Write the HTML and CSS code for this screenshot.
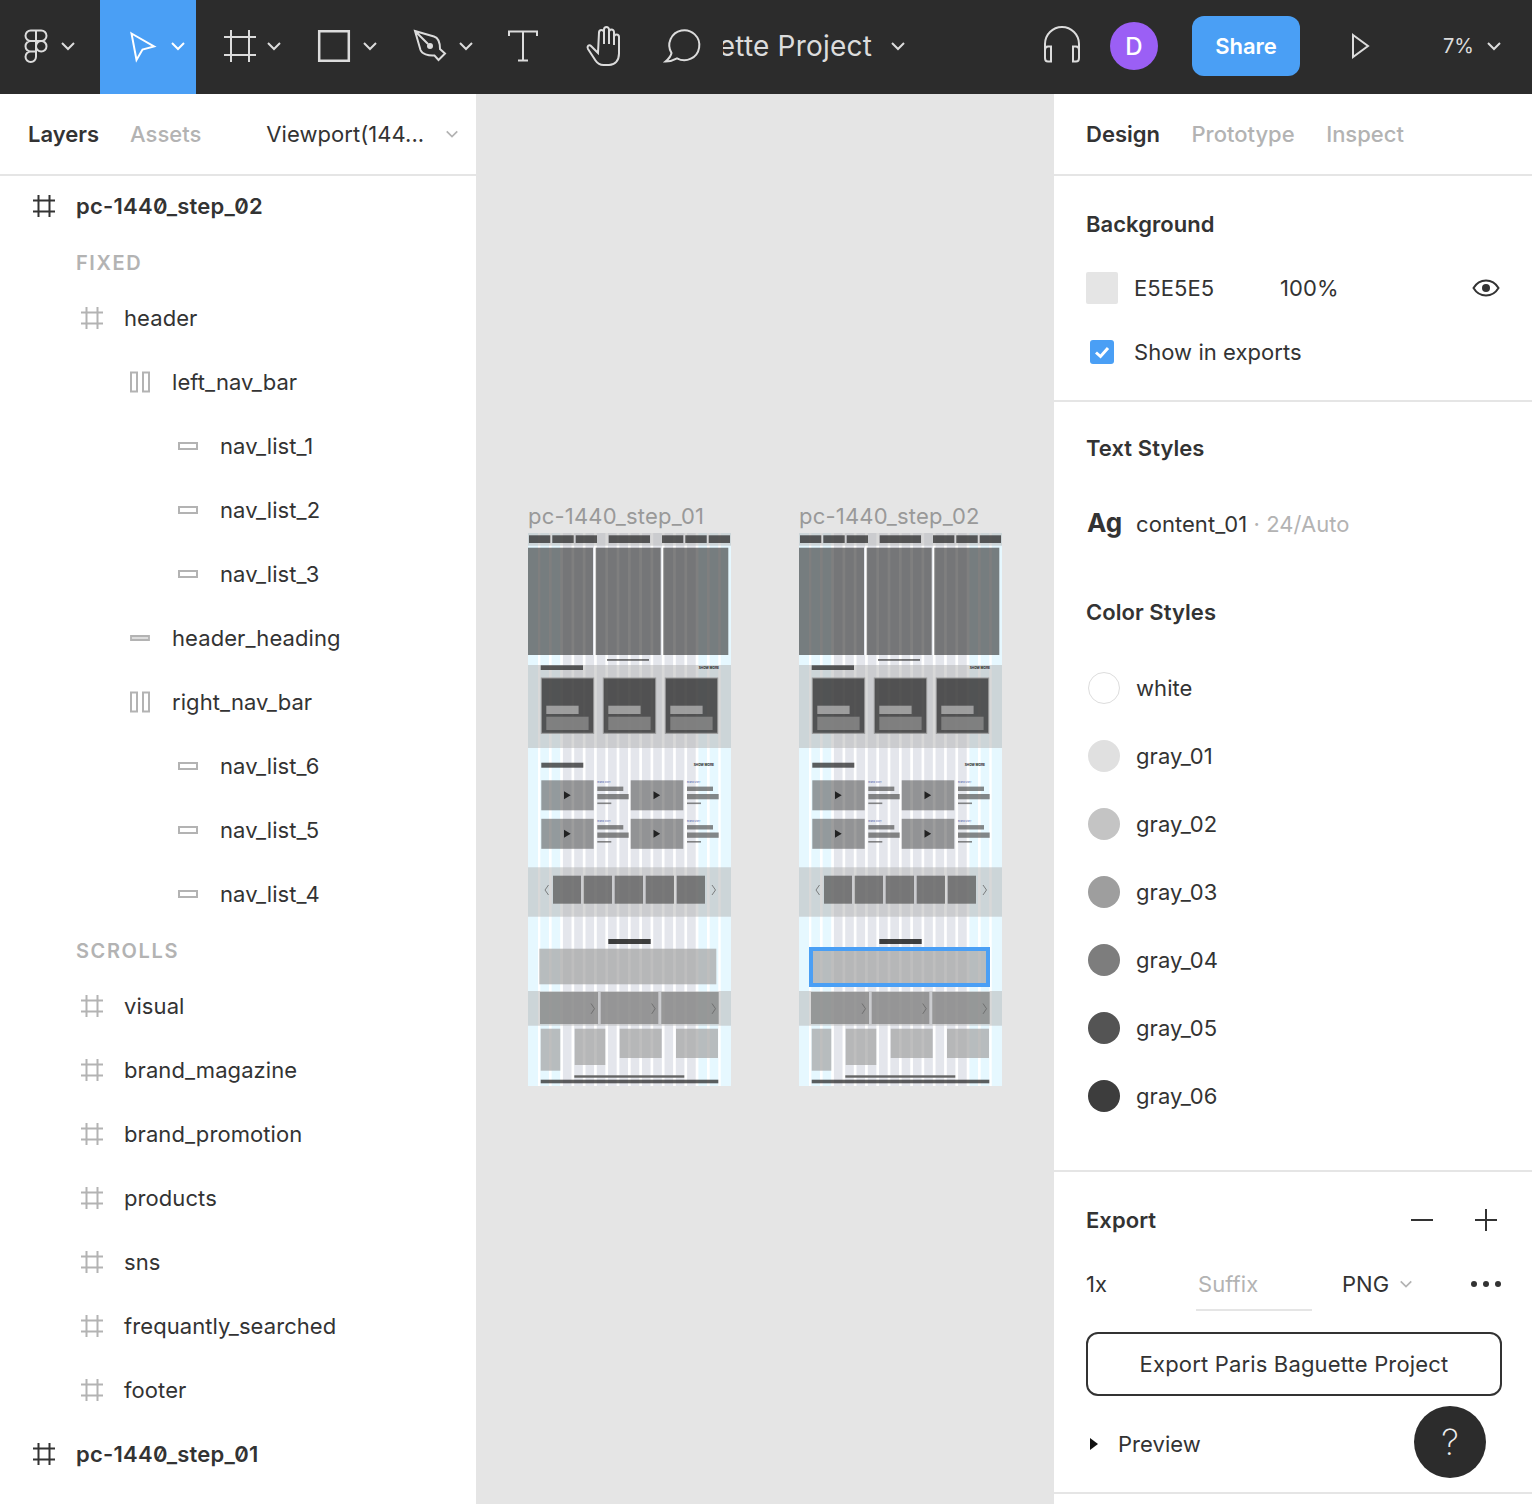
FILE: index.html
```html
<!DOCTYPE html>
<html lang="en">
<head>
  <meta charset="UTF-8" />
  <title>Paris Baguette Project - Figma</title>
  <link rel="stylesheet" href="styles.css">
</head>
<body>
  <!-- shared icons and the wireframe drawn on the canvas -->
  <svg class="defs" aria-hidden="true">
    <symbol id="i-chev" viewBox="0 0 16 16"><path d="M2 5l6 6 6-6" fill="none" stroke="currentColor" stroke-width="2"/></symbol>
    <symbol id="i-frame" viewBox="0 0 24 24"><path d="M6.5 1v22M17.5 1v22M1 6.5h22M1 17.5h22" fill="none" stroke="currentColor" stroke-width="2"/></symbol>
    <symbol id="i-cols" viewBox="0 0 24 24"><path d="M3 2.5h6v19H3zM15 2.5h6v19h-6z" fill="none" stroke="currentColor" stroke-width="2"/></symbol>
    <symbol id="i-rect" viewBox="0 0 24 24"><path d="M3 9h18v6H3z" fill="none" stroke="currentColor" stroke-width="2"/></symbol>
    <symbol id="i-bar" viewBox="0 0 24 24"><path d="M3 10h18v4H3z" fill="#ddd" stroke="currentColor" stroke-width="1.8"/></symbol>

    <symbol id="video-row" viewBox="0 0 203 553">
      <rect class="w-thumb" x="13.3" y="247.3" width="52.4" height="30"/>
      <rect class="w-thumb" x="102.7" y="247.3" width="52.6" height="30"/>
      <path class="w-play" d="M36 258.2l6.7 4-6.7 4zM125.5 258.2l6.7 4-6.7 4z"/>
      <rect class="w-line" x="69.3" y="253.6" width="26" height="4.4"/>
      <rect class="w-line" x="69.3" y="261" width="31.4" height="5.3"/>
      <rect class="w-line" x="69.3" y="269.5" width="14" height="1.6"/>
      <rect class="w-line" x="159" y="253.6" width="26" height="4.4"/>
      <rect class="w-line" x="159" y="261" width="31.7" height="5.3"/>
      <rect class="w-line" x="159" y="269.5" width="14" height="1.6"/>
    </symbol>

    <symbol id="wireframe" viewBox="0 0 203 553">
      <rect class="w-page" width="203" height="553"/>

      <!-- layout grid, the frames sit over it and let it show through -->
      <rect class="w-col-side" width="10" height="553"/>
      <rect class="w-col-side" x="12.33" width="8.6" height="553"/>
      <rect class="w-col-side" x="23.62" width="8.6" height="553"/>
      <rect class="w-col" x="34.91" width="8.6" height="553"/>
      <rect class="w-col" x="46.2" width="8.6" height="553"/>
      <rect class="w-col" x="57.49" width="8.6" height="553"/>
      <rect class="w-col" x="68.78" width="8.6" height="553"/>
      <rect class="w-col" x="80.07" width="8.6" height="553"/>
      <rect class="w-col" x="91.36" width="8.6" height="553"/>
      <rect class="w-col" x="102.65" width="8.6" height="553"/>
      <rect class="w-col" x="113.94" width="8.6" height="553"/>
      <rect class="w-col" x="125.23" width="8.6" height="553"/>
      <rect class="w-col" x="136.52" width="8.6" height="553"/>
      <rect class="w-col" x="147.81" width="8.6" height="553"/>
      <rect class="w-col" x="159.1" width="8.6" height="553"/>
      <rect class="w-col-side" x="170.39" width="8.6" height="553"/>
      <rect class="w-col-side" x="181.68" width="8.6" height="553"/>
      <rect class="w-col-side" x="192.7" width="10.3" height="553"/>

      <rect class="w-band" width="203" height="12.7"/>
      <rect class="w-dark" x="1" y="2.3" width="21.3" height="7.7"/>
      <rect class="w-dark" x="24.3" y="2.3" width="21.4" height="7.7"/>
      <rect class="w-dark" x="47.7" y="2.3" width="21.3" height="7.7"/>
      <rect class="w-dark" x="80.7" y="2.3" width="41.3" height="7.7"/>
      <rect class="w-dark" x="134" y="2.3" width="21.3" height="7.7"/>
      <rect class="w-dark" x="157.3" y="2.3" width="21.4" height="7.7"/>
      <rect class="w-dark" x="180.7" y="2.3" width="21.3" height="7.7"/>

      <rect class="w-hero" y="14.7" width="65" height="107.3"/>
      <rect class="w-hero" x="67.7" y="14.7" width="65" height="107.3"/>
      <rect class="w-hero" x="135.3" y="14.7" width="65" height="107.3"/>
      <rect class="w-ink" x="79" y="126.3" width="42" height="1.3"/>

      <rect class="w-band" y="132" width="203" height="83"/>
      <rect class="w-dark" x="12.7" y="132.3" width="42.3" height="4.7"/>
      <rect class="w-card" x="13.3" y="145" width="52.4" height="55.3"/>
      <rect class="w-card" x="75.3" y="145" width="52.4" height="55.3"/>
      <rect class="w-card" x="137.3" y="145" width="52.4" height="55.3"/>
      <rect class="w-soft" x="18.3" y="172.7" width="32.3" height="8.3"/>
      <rect class="w-soft" x="80.3" y="172.7" width="32.3" height="8.3"/>
      <rect class="w-soft" x="142.3" y="172.7" width="32.3" height="8.3"/>
      <rect class="w-inner" x="18.3" y="183.7" width="42.3" height="13.3"/>
      <rect class="w-inner" x="80.3" y="183.7" width="42.3" height="13.3"/>
      <rect class="w-inner" x="142.3" y="183.7" width="42.3" height="13.3"/>

      <rect class="w-dark" x="13.3" y="229.7" width="42" height="5"/>

      <use href="#video-row" width="203" height="553"/>
      <use href="#video-row" y="38.5" width="203" height="553"/>

      <rect class="w-band" y="334.3" width="203" height="49.4"/>
      <rect class="w-square" x="25" y="342.7" width="28" height="28"/>
      <rect class="w-square" x="55.7" y="342.7" width="28.3" height="28"/>
      <rect class="w-square" x="86.7" y="342.7" width="28.3" height="28"/>
      <rect class="w-square" x="117.7" y="342.7" width="28.3" height="28"/>
      <rect class="w-square" x="148.7" y="342.7" width="28.3" height="28"/>
      <path class="w-chev" d="M20.5 352l-3.5 5 3.5 5M184 352l3.5 5-3.5 5"/>

      <rect class="w-ink" x="80.3" y="406" width="42.4" height="5"/>
      <rect class="w-light" x="11.3" y="415.7" width="177" height="35.6"/>

      <rect class="w-band" y="458" width="203" height="34.7"/>
      <rect class="w-slab" x="12" y="459" width="58" height="32"/>
      <rect class="w-slab" x="72.7" y="459" width="57.6" height="32"/>
      <rect class="w-slab" x="133.3" y="459" width="57.4" height="32"/>
      <path class="w-chev" d="M63 470.5l3.5 5.2-3.5 5.2M123.7 470.5l3.5 5.2-3.5 5.2M184 470.5l3.5 5.2-3.5 5.2"/>

      <rect class="w-light" x="12.7" y="495.7" width="19.6" height="42"/>
      <rect class="w-light" x="46.7" y="495.7" width="30.6" height="36.3"/>
      <rect class="w-light" x="91.7" y="495.7" width="42" height="29.3"/>
      <rect class="w-light" x="148" y="495.7" width="42" height="29.3"/>
      <rect class="w-foot" x="46.3" y="542.3" width="110" height="2.4"/>
      <rect class="w-dark" x="12.7" y="546.7" width="177.6" height="3.6"/>
    </symbol>
  </svg>

  <div class="app">
    <header class="topbar">
      <div class="tool tool-logo">
        <svg class="tool-icon" viewBox="0 0 40 40"><path d="M20 4.5h-5.25a5.25 5.25 0 0 0 0 10.5H20zM20 4.5h5.25a5.25 5.25 0 0 1 0 10.5H20zM20 15h-5.25a5.25 5.25 0 0 0 0 10.5H20zM20 25.5h-5.25a5.25 5.25 0 1 0 5.25 5.25z"/><circle cx="25.25" cy="20.25" r="5.25"/></svg>
        <svg class="chev"><use href="#i-chev"/></svg>
      </div>
      <div class="tool active">
        <svg class="tool-icon" viewBox="0 0 40 40"><path d="M7.5 7.5L30 20.5l-11.5 3-6 10.5z"/></svg>
        <svg class="chev"><use href="#i-chev"/></svg>
      </div>
      <div class="tool">
        <svg class="tool-icon" viewBox="0 0 40 40"><path d="M11 4v32M29 4v32M4 11h32M4 29h32"/></svg>
        <svg class="chev"><use href="#i-chev"/></svg>
      </div>
      <div class="tool">
        <svg class="tool-icon" viewBox="0 0 40 40"><path class="thick" d="M3.2 5.2h29.6v29.6H3.2z"/></svg>
        <svg class="chev"><use href="#i-chev"/></svg>
      </div>
      <div class="tool">
        <svg class="tool-icon" viewBox="0 0 40 40"><path d="M3 5l19 5.5c5 1.500 6 6.500 6 12.500l5 4.500-6.500 6.500-4-4.500C16 30 10 28 8.500 24zM3 5l13 13"/><circle class="dot" cx="18" cy="20" r="3"/></svg>
        <svg class="chev"><use href="#i-chev"/></svg>
      </div>
      <div class="plain-tool tool-text">
        <svg class="tool-icon small" viewBox="0 0 32 32"><path d="M2 6V1.500h28V6M16 1.500v29M11 30.500h10"/></svg>
      </div>
      <div class="plain-tool tool-hand">
        <svg class="tool-icon" viewBox="0 0 40 40"><path d="M15 27l-7-7c-2-2-4.500.5-3 3l7.500 11.500c2 3 4 4.500 8 4.500H26c6 0 10-4.500 10-11.500V11a2.500 2.500 0 0 0-5 0v8V6a2.500 2.500 0 0 0-5 0v12V3.500a2.500 2.500 0 0 0-5 0V18V6.500a2.500 2.500 0 0 0-5 0z"/></svg>
      </div>
      <div class="plain-tool tool-comment">
        <svg class="tool-icon" viewBox="0 0 40 40"><path d="M9.500 27A15 15 0 1 1 15 32.300c-3 1.700-7 3.200-11.500 3.200 3-2.500 5.500-5.500 6-8.500z"/></svg>
      </div>
      <div class="doc-title"><span>Paris Baguette Project</span></div>
      <svg class="chev doc-chev"><use href="#i-chev"/></svg>

      <svg class="tool-icon phones" viewBox="0 0 40 40"><path d="M3 24v-6a17 17 0 0 1 34 0v6M3 24c0-2 1-3.500 3-3.500h3v15H6c-2 0-3-1.500-3-3.500zM37 24c0-2-1-3.500-3-3.500h-3v15h3c2 0 3-1.500 3-3.500z"/></svg>
      <div class="avatar">D</div>
      <button class="share">Share</button>
      <svg class="tool-icon play" viewBox="0 0 18 28"><path d="M1 3l15 11L1 25z"/></svg>
      <div class="zoom-val">7%</div>
      <svg class="chev zoom-chev"><use href="#i-chev"/></svg>
    </header>

    <div class="workspace">
      <aside class="layers">
        <div class="tabs">
          <span class="tab on">Layers</span>
          <span class="tab">Assets</span>
          <span class="page-name">Viewport(144...</span>
          <svg class="chev page-chev"><use href="#i-chev"/></svg>
        </div>
        <ul class="tree">
          <li class="row top"><svg class="row-icon"><use href="#i-frame"/></svg>pc-1440_step_02</li>
          <li class="sec-label">FIXED</li>
          <li class="row lv1"><svg class="row-icon"><use href="#i-frame"/></svg>header</li>
          <li class="row lv2"><svg class="row-icon"><use href="#i-cols"/></svg>left_nav_bar</li>
          <li class="row lv3"><svg class="row-icon"><use href="#i-rect"/></svg>nav_list_1</li>
          <li class="row lv3"><svg class="row-icon"><use href="#i-rect"/></svg>nav_list_2</li>
          <li class="row lv3"><svg class="row-icon"><use href="#i-rect"/></svg>nav_list_3</li>
          <li class="row lv2"><svg class="row-icon"><use href="#i-bar"/></svg>header_heading</li>
          <li class="row lv2"><svg class="row-icon"><use href="#i-cols"/></svg>right_nav_bar</li>
          <li class="row lv3"><svg class="row-icon"><use href="#i-rect"/></svg>nav_list_6</li>
          <li class="row lv3"><svg class="row-icon"><use href="#i-rect"/></svg>nav_list_5</li>
          <li class="row lv3"><svg class="row-icon"><use href="#i-rect"/></svg>nav_list_4</li>
          <li class="sec-label">SCROLLS</li>
          <li class="row lv1"><svg class="row-icon"><use href="#i-frame"/></svg>visual</li>
          <li class="row lv1"><svg class="row-icon"><use href="#i-frame"/></svg>brand_magazine</li>
          <li class="row lv1"><svg class="row-icon"><use href="#i-frame"/></svg>brand_promotion</li>
          <li class="row lv1"><svg class="row-icon"><use href="#i-frame"/></svg>products</li>
          <li class="row lv1"><svg class="row-icon"><use href="#i-frame"/></svg>sns</li>
          <li class="row lv1"><svg class="row-icon"><use href="#i-frame"/></svg>frequantly_searched</li>
          <li class="row lv1"><svg class="row-icon"><use href="#i-frame"/></svg>footer</li>
          <li class="row top"><svg class="row-icon"><use href="#i-frame"/></svg>pc-1440_step_01</li>
        </ul>
      </aside>

      <main class="canvas">
        <div class="board board-1">
          <div class="board-name">pc-1440_step_01</div>
          <svg class="board-art" viewBox="0 0 203 553">
            <use href="#wireframe" width="203" height="553"/>
            <text class="w-tiny" x="170.7" y="136.2">SHOW MORE</text>
            <text class="w-tiny" x="165.7" y="233.2">SHOW MORE</text>
            <text class="w-blue" x="69.3" y="250">Brand Story</text>
            <text class="w-blue" x="159" y="250">Brand Story</text>
            <text class="w-blue" x="69.3" y="288.5">Brand Story</text>
            <text class="w-blue" x="159" y="288.5">Brand Story</text>
          </svg>
        </div>
        <div class="board board-2">
          <div class="board-name">pc-1440_step_02</div>
          <svg class="board-art" viewBox="0 0 203 553">
            <use href="#wireframe" width="203" height="553"/>
            <text class="w-tiny" x="170.7" y="136.2">SHOW MORE</text>
            <text class="w-tiny" x="165.7" y="233.2">SHOW MORE</text>
            <text class="w-blue" x="69.3" y="250">Brand Story</text>
            <text class="w-blue" x="159" y="250">Brand Story</text>
            <text class="w-blue" x="69.3" y="288.5">Brand Story</text>
            <text class="w-blue" x="159" y="288.5">Brand Story</text>
          </svg>
          <div class="selection"></div>
        </div>
      </main>

      <aside class="design">
        <div class="tabs tabs-design">
          <span class="tab on">Design</span>
          <span class="tab">Prototype</span>
          <span class="tab">Inspect</span>
        </div>

        <section class="panel panel-bg">
          <h3>Background</h3>
          <div class="prop">
            <span class="bg-swatch"></span>
            <span class="bg-hex">E5E5E5</span>
            <span>100%</span>
            <svg class="eye" viewBox="0 0 28 18"><path d="M1.5 9C4.5 4 9 1.500 14 1.500S23.500 4 26.500 9c-3 5-7.500 7.500-12.500 7.500S4.500 14 1.500 9z"/><circle cx="14" cy="9" r="4"/></svg>
          </div>
          <div class="prop">
            <span class="check"><svg viewBox="0 0 24 24"><path d="M6 12.500l4.500 4L18 8"/></svg></span>
            <span>Show in exports</span>
          </div>
        </section>

        <section class="panel panel-styles">
          <h3>Text Styles</h3>
          <div class="prop text-style"><span class="ag">Ag</span><span>content_01</span><span class="muted">&nbsp;· 24/Auto</span></div>
          <h3 class="color-head">Color Styles</h3>
          <ul class="colors">
            <li><span class="dot-sw c-white"></span>white</li>
            <li><span class="dot-sw c-1"></span>gray_01</li>
            <li><span class="dot-sw c-2"></span>gray_02</li>
            <li><span class="dot-sw c-3"></span>gray_03</li>
            <li><span class="dot-sw c-4"></span>gray_04</li>
            <li><span class="dot-sw c-5"></span>gray_05</li>
            <li><span class="dot-sw c-6"></span>gray_06</li>
          </ul>
        </section>

        <section class="panel panel-export">
          <div class="export-head">
            <h3>Export</h3>
            <svg class="ctl" viewBox="0 0 32 32"><path d="M5 16h22"/></svg>
            <svg class="ctl" viewBox="0 0 32 32"><path d="M5 16h22M16 5v22"/></svg>
          </div>
          <div class="prop export-row">
            <span class="scale">1x</span>
            <span class="suffix">Suffix</span>
            <span class="format">PNG</span>
            <svg class="chev format-chev"><use href="#i-chev"/></svg>
            <span class="more"><i></i><i></i><i></i></span>
          </div>
          <button class="export-btn">Export Paris Baguette Project</button>
          <div class="prop preview"><span class="caret"></span>Preview</div>
        </section>
      </aside>
    </div>

    <div class="help">?</div>
  </div>
</body>
</html>
```

FILE: styles.css
```css
* {
  box-sizing: border-box;
}

html, body {
  margin: 0;
  padding: 0;
}

body {
  font-family: Inter, "Noto Sans", sans-serif;
  font-size: 24px;
  color: #333;
  background: white;
  overflow: hidden;
}

.defs {
  position: absolute;
  width: 0;
  height: 0;
}

.app {
  position: relative;
  width: 1532px;
  height: 1504px;
  display: flex;
  flex-direction: column;
  overflow: hidden;
}

/* top bar */
.topbar {
  height: 94px;
  flex: none;
  background: #2c2c2c;
  display: flex;
  align-items: center;
  padding-bottom: 2px;
  color: #dcdcdc;
}

.tool {
  width: 96px;
  height: 94px;
  margin-bottom: -2px;
  flex: none;
  display: flex;
  align-items: center;
  gap: 6px;
  padding: 0 0 2px 24px;
}

.tool-logo {
  width: 100px;
  padding-left: 16px;
  gap: 4px;
}

.tool.active {
  background: #4a9ff5;
  color: white;
}

.tool-icon {
  width: 40px;
  height: 40px;
  flex: none;
}

.tool-icon path, .tool-icon circle {
  fill: none;
  stroke: currentColor;
  stroke-width: 2;
}

.tool-icon .thick {
  stroke-width: 2.5;
}

.tool-icon .dot {
  fill: currentColor;
  stroke: none;
}

.tool-icon.small {
  width: 32px;
  height: 32px;
}

.chev {
  width: 16px;
  height: 16px;
  flex: none;
}

.plain-tool {
  height: 94px;
  margin-bottom: -2px;
  padding-bottom: 2px;
  flex: none;
  display: flex;
  align-items: center;
}

.tool-text {
  width: 78px;
  padding-left: 23px;
}

.tool-hand {
  width: 82px;
  padding-left: 21px;
}

.tool-comment {
  width: 79px;
  padding-left: 18px;
}

.doc-title {
  width: 149px;
  flex: none;
  overflow: hidden;
  display: flex;
  justify-content: flex-end;
  white-space: nowrap;
  font-size: 28px;
  letter-spacing: 0.2px;
}

.doc-chev {
  margin-left: 18px;
}

.phones {
  margin-left: 136px;
}

.avatar {
  width: 48px;
  height: 48px;
  flex: none;
  margin-left: 28px;
  border-radius: 50%;
  background: #9b5ff5;
  color: white;
  display: flex;
  align-items: center;
  justify-content: center;
  font-size: 24px;
  font-weight: 500;
}

.share {
  width: 108px;
  height: 60px;
  flex: none;
  margin-left: 34px;
  border: none;
  border-radius: 12px;
  background: #4a9ff5;
  color: white;
  font-family: inherit;
  font-size: 22px;
  font-weight: 600;
}

.play {
  width: 18px;
  height: 28px;
  margin-left: 52px;
}

.zoom-val {
  margin-left: 73px;
  font-size: 20px;
  flex: none;
}

.zoom-chev {
  margin-left: 12px;
}

/* main columns */
.workspace {
  flex: 1;
  display: grid;
  grid-template-columns: 476px 578px 478px;
  min-height: 0;
}

.tabs {
  height: 82px;
  display: flex;
  align-items: center;
  gap: 31px;
  padding-left: 28px;
  border-bottom: 2px solid #e5e5e5;
}

.tab {
  font-size: 22px;
  font-weight: 500;
  color: #b3b3b3;
}

.tab.on {
  font-weight: 600;
  color: #333;
}

.tabs-design {
  padding-left: 32px;
  gap: 31.5px;
}

.page-name {
  margin-left: 34px;
  font-size: 22px;
  letter-spacing: 0.05px;
}

.page-chev {
  width: 14px;
  height: 14px;
  margin-left: -10px;
  color: #b3b3b3;
}

/* layers */
.layers {
  overflow: hidden;
}

.tree {
  list-style: none;
  margin: -2px 0 0;
  padding: 0;
}

.row {
  height: 64px;
  display: flex;
  align-items: center;
  gap: 20px;
  white-space: nowrap;
  font-size: 22px;
  letter-spacing: 0.08px;
}

.row-icon {
  width: 24px;
  height: 24px;
  flex: none;
  color: #b3b3b3;
}

.row.top {
  padding-left: 32px;
  font-weight: 600;
  letter-spacing: 0.25px;
  font-feature-settings: "zero";
}

.row.top .row-icon {
  color: #333;
}

.lv1 {
  padding-left: 80px;
}

.lv2 {
  padding-left: 128px;
}

.lv3 {
  padding-left: 176px;
}

.sec-label {
  height: 48px;
  display: flex;
  align-items: center;
  padding: 2px 0 0 76px;
  font-size: 20px;
  font-weight: 600;
  letter-spacing: 1.6px;
  color: #b3b3b3;
}

/* canvas */
.canvas {
  position: relative;
  background: #e5e5e5;
}

.board {
  position: absolute;
  top: 439px;
  width: 203px;
  height: 553px;
}

.board-1 {
  left: 52px;
}

.board-2 {
  left: 323px;
}

.board-name {
  position: absolute;
  left: 0;
  top: -32px;
  font-size: 22px;
  line-height: 30px;
  letter-spacing: 0.2px;
  color: #999;
  white-space: nowrap;
}

.board-art {
  display: block;
  width: 203px;
  height: 553px;
}

.selection {
  position: absolute;
  left: 9.5px;
  top: 413.5px;
  width: 181.5px;
  height: 40px;
  border: 4px solid #4a9ff5;
}

.w-page { fill: #fff; }
.w-col { fill: #e4e6ec; }
.w-col-side { fill: #e6f8ff; }
.w-band { fill: rgba(178, 178, 178, 0.5); }
.w-dark { fill: rgba(45, 45, 45, 0.76); }
.w-hero { fill: rgba(52, 52, 52, 0.63); }
.w-ink { fill: rgba(30, 30, 30, 0.85); }
.w-card { fill: rgba(42, 42, 42, 0.76); stroke: #999; stroke-width: 1; }
.w-soft { fill: rgba(190, 190, 190, 0.7); }
.w-inner { fill: rgba(158, 158, 158, 0.6); }
.w-square { fill: rgba(81, 81, 81, 0.7); }
.w-thumb { fill: rgba(92, 92, 92, 0.6); }
.w-play { fill: #222; }
.w-line { fill: rgba(85, 85, 85, 0.7); }
.w-slab { fill: rgba(125, 125, 125, 0.7); }
.w-light { fill: rgba(162, 162, 162, 0.7); }
.w-foot { fill: #666; }
.w-chev { fill: none; stroke: #666; stroke-width: 0.8; }
.w-tiny { font-size: 3.2px; font-weight: 700; fill: #222; }
.w-blue { font-size: 2.4px; fill: #4a5aa8; }

/* design panel */
.design {
  position: relative;
  overflow: hidden;
}

.panel {
  padding: 16px 30px 16px 32px;
  border-bottom: 2px solid #e5e5e5;
}

.panel h3 {
  margin: 0;
  height: 64px;
  display: flex;
  align-items: center;
  font-size: 22px;
  font-weight: 600;
  letter-spacing: 0.05px;
}

.prop {
  height: 64px;
  display: flex;
  align-items: center;
  font-size: 22px;
  letter-spacing: 0.06px;
}

.bg-swatch {
  width: 32px;
  height: 32px;
  flex: none;
  background: #e5e5e5;
  border-radius: 2px;
}

.bg-hex {
  width: 146px;
  margin-left: 16px;
}

.eye {
  width: 28px;
  height: 18px;
  margin-left: auto;
  margin-right: 2px;
}

.eye path {
  fill: none;
  stroke: #333;
  stroke-width: 2;
}

.eye circle {
  fill: #333;
}

.check {
  width: 24px;
  height: 24px;
  flex: none;
  margin: 0 20px 0 4px;
  border-radius: 3px;
  background: #4a9ff5;
}

.check svg {
  display: block;
}

.check path {
  fill: none;
  stroke: white;
  stroke-width: 3;
}

.panel-styles {
  padding-top: 14px;
  padding-bottom: 40px;
}

.text-style {
  margin-top: 12px;
}

.ag {
  width: 50px;
  padding-left: 1px;
  margin-bottom: 4px;
  font-size: 26px;
  font-weight: 700;
}

.muted {
  color: #b3b3b3;
}

.panel h3.color-head {
  margin-top: 24px;
}

.colors {
  list-style: none;
  margin: 10px 0 0;
  padding: 0;
}

.colors li {
  height: 68px;
  display: flex;
  align-items: center;
  gap: 16px;
  padding-left: 2px;
  font-size: 22px;
  letter-spacing: 0.06px;
}

.dot-sw {
  width: 32px;
  height: 32px;
  flex: none;
  border-radius: 50%;
}

.c-white { background: #fff; border: 1px solid #ddd; }
.c-1 { background: #e0e0e0; }
.c-2 { background: #c4c4c4; }
.c-3 { background: #9e9e9e; }
.c-4 { background: #7d7d7d; }
.c-5 { background: #545454; }
.c-6 { background: #3d3d3d; }

.export-head {
  display: flex;
  align-items: center;
  gap: 32px;
}

.export-head h3 {
  margin-right: auto;
}

.ctl {
  width: 32px;
  height: 32px;
}

.ctl path {
  fill: none;
  stroke: #333;
  stroke-width: 2;
}

.scale {
  width: 110px;
}

.suffix {
  width: 116px;
  height: 54px;
  padding: 11px 0 0 2px;
  color: #b3b3b3;
  border-bottom: 2px solid #e5e5e5;
  align-self: flex-start;
  margin-top: 5px;
  line-height: 32px;
}

.format {
  margin-left: 30px;
}

.format-chev {
  width: 14px;
  height: 14px;
  margin-left: 10px;
  color: #b3b3b3;
}

.more {
  margin-left: auto;
  margin-right: 1px;
  display: flex;
  gap: 6px;
}

.more i {
  width: 6px;
  height: 6px;
  border-radius: 50%;
  background: #333;
}

.export-btn {
  display: block;
  width: 416px;
  height: 64px;
  margin-top: 16px;
  border: 2px solid #333;
  border-radius: 12px;
  background: white;
  color: #333;
  font-family: inherit;
  font-size: 22px;
  letter-spacing: 0.17px;
}

.preview {
  margin-top: 16px;
}

.caret {
  width: 0;
  height: 0;
  margin: 0 20px 0 4px;
  border-left: 8px solid #111;
  border-top: 6px solid transparent;
  border-bottom: 6px solid transparent;
}

.help {
  position: absolute;
  left: 1414px;
  top: 1406px;
  width: 72px;
  height: 72px;
  border-radius: 50%;
  background: #2c2c2c;
  color: #eee;
  display: flex;
  align-items: center;
  justify-content: center;
  font-size: 36px;
  font-weight: 200;
}
```
